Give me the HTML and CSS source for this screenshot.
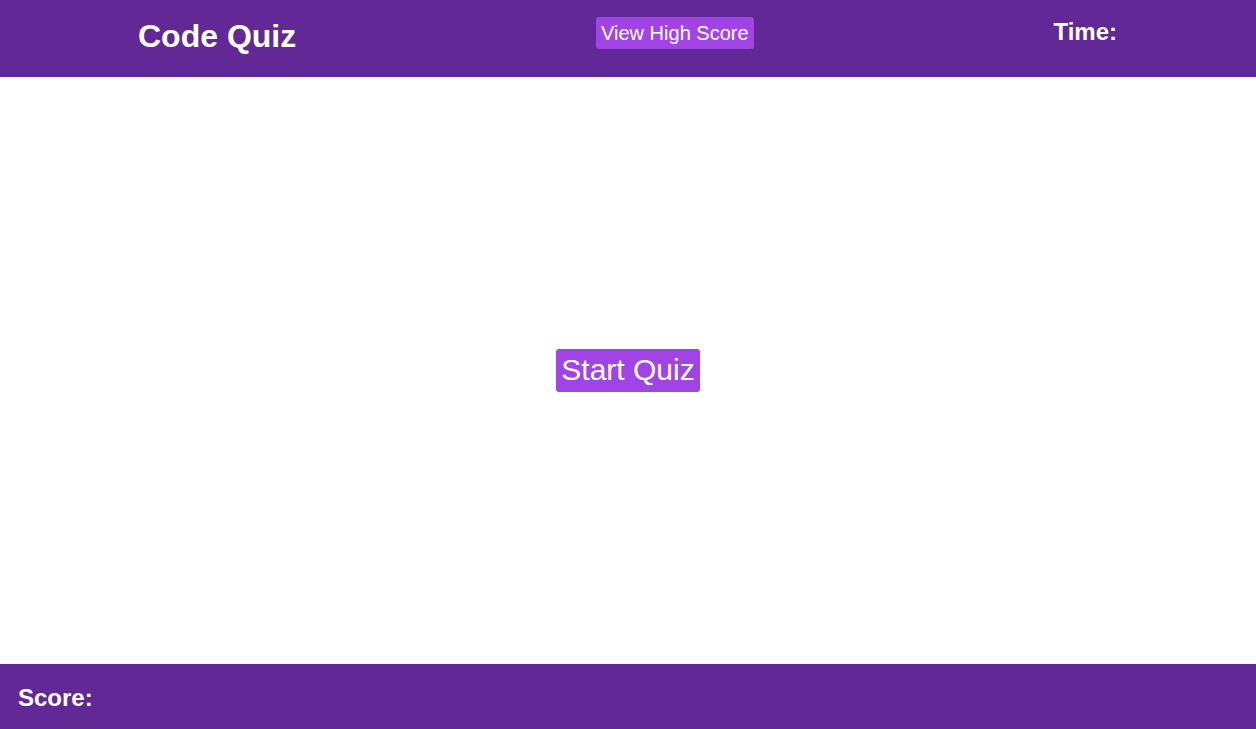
FILE: index.html
```html
<!DOCTYPE html>
<html>
<head>
<meta charset="utf-8">
<link rel="stylesheet" href="styles.css">
</head>
<body>
<div class="page">
  <header class="topbar">
    <h1 class="title">Code Quiz</h1>
    <button class="btn btn-small">View High Score</button>
    <h2 class="time">Time:</h2>
  </header>
  <main class="main">
    <button class="btn btn-large">Start Quiz</button>
  </main>
  <footer class="footer">
    <h2 class="score">Score:</h2>
  </footer>
</div>
</body>
</html>
```
FILE: styles.css
```css
html, body {
  margin: 0;
  padding: 0;
}
body {
  font-family: "Liberation Sans", Arial, sans-serif;
  color: #fff;
  background: #fff;
}
.page {
  display: flex;
  flex-direction: column;
  height: 729px;
}
.topbar {
  height: 77px;
  box-sizing: border-box;
  background: #622996;
  display: flex;
  align-items: flex-start;
  justify-content: space-between;
  padding: 18px 139px 0 138px;
}
.title {
  margin: 0;
  font-size: 32px;
  font-weight: bold;
  line-height: 37px;
}
.time {
  margin: 0;
  font-size: 24px;
  font-weight: bold;
  line-height: 28px;
}
.btn {
  font-family: "Liberation Sans", Arial, sans-serif;
  background: #a044e6;
  color: #fff;
  border: none;
  border-radius: 3px;
  cursor: pointer;
}
.btn-small {
  margin-top: -1px;
  font-size: 20px;
  line-height: 23px;
  padding: 5px 5px 4px;
}
.btn-large {
  font-size: 30px;
  line-height: 34px;
  padding: 4px 5px 5px;
}
.main {
  flex: 1;
  display: flex;
  align-items: center;
  justify-content: center;
}
.footer {
  height: 65px;
  box-sizing: border-box;
  background: #622996;
  padding: 20px 18px 0;
}
.score {
  margin: 0;
  font-size: 24px;
  font-weight: bold;
  line-height: 28px;
}
```
